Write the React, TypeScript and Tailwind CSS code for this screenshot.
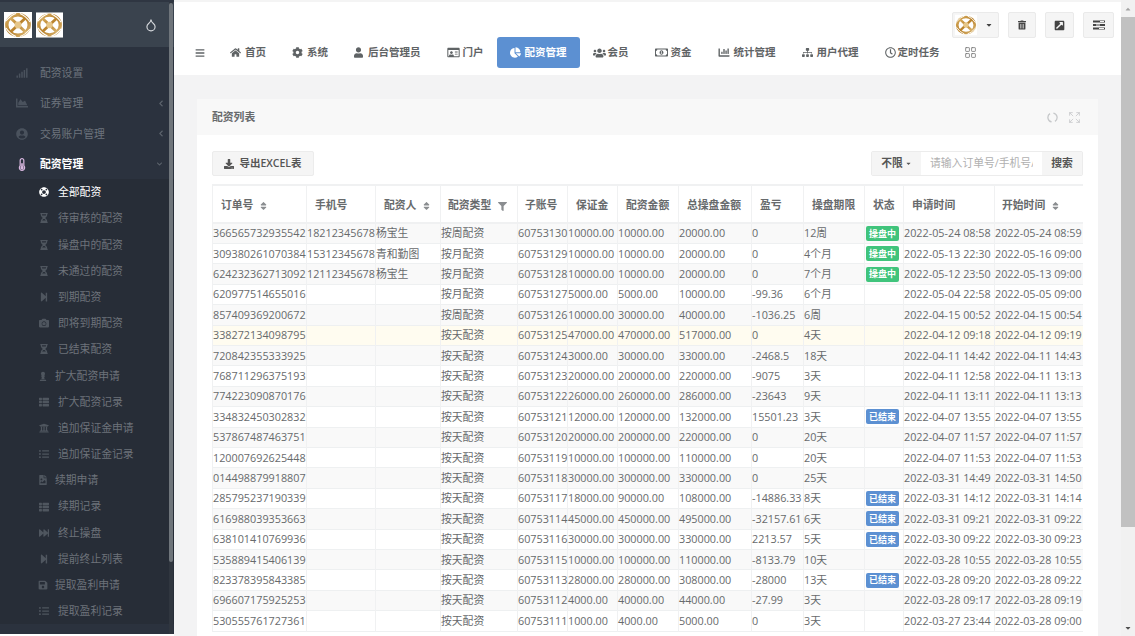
import React from "react";
import {
  FaSignal, FaChartArea, FaUserCircle, FaThermometerHalf, FaLifeRing, FaHourglassHalf, FaStepForward, FaCamera,
  FaChessPawn, FaThList, FaUniversity, FaListUl, FaFileImage, FaFastForward, FaSave, FaHome, FaCog, FaUser,
  FaRegIdCard, FaChartPie, FaUsers, FaRegMoneyBillAlt, FaChartBar, FaSitemap, FaRegClock, FaTrashAlt,
  FaExternalLinkSquareAlt, FaBars, FaDownload, FaSort, FaFilter, FaChevronLeft, FaChevronDown, FaCaretDown, FaCaretUp,
} from "react-icons/fa";
import { Droplet, Expand, LayoutGrid } from "lucide-react";

const font = "font-['Open_Sans','Noto_Sans_CJK_SC',sans-serif]";

function Logo({ className }: { className: string }) {
  return (
    <svg viewBox="0 0 28 26" className={className}>
      <defs>
        <linearGradient id="gold" x1="0" y1="0" x2="1" y2="1">
          <stop offset="0" stopColor="#d9b063" />
          <stop offset="0.5" stopColor="#b9822c" />
          <stop offset="1" stopColor="#dcb874" />
        </linearGradient>
      </defs>
      <rect width="28" height="26" fill="#fff" />
      <ellipse cx="14" cy="13" rx="11.2" ry="10.2" fill="none" stroke="url(#gold)" strokeWidth="3.4" />
      <path d="M6 5.5 L22 20.5 M22 5.5 L6 20.5" fill="none" stroke="url(#gold)" strokeWidth="3" />
      <path d="M2 9 Q7 3 12 1.5 M26 17 Q21 23 16 24.5 M16 1.5 Q22 4 26 10 M12 24.5 Q6 22 2 16" fill="none" stroke="#fff" strokeWidth="1.1" />
      <circle cx="14" cy="13" r="3.4" fill="#e6c688" />
    </svg>
  );
}

type Ic = React.ComponentType<{ className?: string }>;
const subs: { t: string; I: Ic; wide?: boolean; active?: boolean }[] = [
  { t: "全部配资", I: FaLifeRing, active: true },
  { t: "待审核的配资", I: FaHourglassHalf },
  { t: "操盘中的配资", I: FaHourglassHalf },
  { t: "未通过的配资", I: FaHourglassHalf },
  { t: "到期配资", I: FaStepForward },
  { t: "即将到期配资", I: FaCamera },
  { t: "已结束配资", I: FaHourglassHalf },
  { t: "扩大配资申请", I: FaChessPawn, wide: true },
  { t: "扩大配资记录", I: FaThList },
  { t: "追加保证金申请", I: FaUniversity },
  { t: "追加保证金记录", I: FaListUl },
  { t: "续期申请", I: FaFileImage, wide: true },
  { t: "续期记录", I: FaThList },
  { t: "终止操盘", I: FaFastForward },
  { t: "提前终止列表", I: FaStepForward },
  { t: "提取盈利申请", I: FaSave, wide: true },
  { t: "提取盈利记录", I: FaListUl },
];
const mains: { t: string; I: Ic; arrow?: boolean }[] = [
  { t: "配资设置", I: FaSignal },
  { t: "证券管理", I: FaChartArea, arrow: true },
  { t: "交易账户管理", I: FaUserCircle, arrow: true },
];

function Sidebar() {
  return (
    <aside className="relative w-[174px] h-[634px] shrink-0 bg-[#2b323e] border-t-2 border-[#2f3642] flex flex-col overflow-hidden">
      <div className="h-[45px] shrink-0 bg-[#3a434e] flex items-center pl-[4px] gap-[4px]">
        <Logo className="w-[28px] h-[26px]" />
        <Logo className="w-[27px] h-[26px]" />
        <Droplet className="w-[14px] h-[16px] ml-[77px] text-[#d5d8dc]" strokeWidth={2} />
      </div>
      <nav className="pt-[11px] flex flex-col">
        {mains.map((m) => (
          <div key={m.t} className="h-[30.3px] flex items-center pl-[16px] text-[#6d747d] text-[10.8px]">
            <m.I className="w-[12px] h-[12px] text-[#4a525d]" />
            <span className="ml-[12px]">{m.t}</span>
            {m.arrow && <FaChevronLeft className="absolute left-[158px] w-[6px] h-[7px] text-[#5d646d]" />}
          </div>
        ))}
        <div className="h-[30.3px] flex items-center pl-[16px] text-white font-semibold text-[10.8px]">
          <FaThermometerHalf className="w-[12px] h-[13px] text-[#d9b8e0]" />
          <span className="ml-[12px]">配资管理</span>
          <FaChevronDown className="absolute left-[156px] w-[7px] h-[6px] text-[#5d646d]" />
        </div>
        <div className="bg-[#272d37] flex flex-col">
          {subs.map((s) => (
            <div
              key={s.t}
              className={`h-[26.2px] flex items-center text-[10.8px] ${s.wide ? "pl-[38px]" : "pl-[39px]"} ${s.active ? "text-white" : "text-[#6d727a]"}`}
            >
              <s.I className={`w-[10px] h-[10px] shrink-0 ${s.active ? "text-white" : "text-[#4f565f]"}`} />
              <span className={s.wide ? "ml-[7px]" : "ml-[9px]"}>{s.t}</span>
            </div>
          ))}
        </div>
      </nav>
      <div className="absolute left-[169px] top-0 bottom-0 w-[4px] bg-[#30363f]" />
      <div className="absolute left-[169px] top-[1px] w-[4px] h-[559px] bg-[#6f757b] rounded-[2px]" />
    </aside>
  );
}

const navs: { t: string; I: Ic; w: string; ic: string; active?: boolean }[] = [
  { t: "首页", I: FaHome, w: "w-[15px]", ic: "w-[11px] h-[11px]" },
  { t: "系统", I: FaCog, w: "w-[15px]", ic: "w-[11px] h-[11px]" },
  { t: "后台管理员", I: FaUser, w: "w-[14px]", ic: "w-[9px] h-[11px]" },
  { t: "门户", I: FaRegIdCard, w: "w-[16px]", ic: "w-[13px] h-[11px]" },
  { t: "配资管理", I: FaChartPie, w: "w-[15px]", ic: "w-[11px] h-[11px]", active: true },
  { t: "会员", I: FaUsers, w: "w-[15px]", ic: "w-[13px] h-[12px]" },
  { t: "资金", I: FaRegMoneyBillAlt, w: "w-[16px]", ic: "w-[13px] h-[11px]" },
  { t: "统计管理", I: FaChartBar, w: "w-[16px]", ic: "w-[12px] h-[11px]" },
  { t: "用户代理", I: FaSitemap, w: "w-[15px]", ic: "w-[11px] h-[11px]" },
  { t: "定时任务", I: FaRegClock, w: "w-[13px]", ic: "w-[11px] h-[11px]" },
];

function Header() {
  return (
    <header className="h-[75px] shrink-0 bg-white flex flex-col">
      <div className="h-[2px] bg-[#f4f4f4]" />
      <div className="h-[10px]" />
      <div className="h-[26px] flex justify-end gap-[9px] pr-[7px] text-[#444]">
        <div className="w-[47px] bg-[#f5f5f5] border border-[#eaeaea] rounded-[2px] flex items-center pl-[2px] gap-[8px]">
          <Logo className="w-[22px] h-[22px]" />
          <FaCaretDown className="w-[8px] h-[8px]" />
        </div>
        <div className="w-[28px] bg-[#f5f5f5] border border-[#eaeaea] rounded-[2px] flex items-center justify-center"><FaTrashAlt className="w-[8px] h-[10px]" /></div>
        <div className="w-[29px] bg-[#f5f5f5] border border-[#eaeaea] rounded-[2px] flex items-center justify-center"><FaExternalLinkSquareAlt className="w-[11px] h-[11px]" /></div>
        <div className="w-[31px] bg-[#f5f5f5] border border-[#eaeaea] rounded-[2px] flex items-center justify-center">
          <svg viewBox="0 0 12 10" className="w-[12px] h-[10px]" fill="currentColor">
            <path d="M0 0.5h12v2H0z M0 4h12v2H0z M0 7.5h12v2H0z" />
            <path d="M7 1h4v1H7z M3 4.5h4v1H3z M6 8h5v1H6z" fill="#f5f5f5" />
          </svg>
        </div>
      </div>
      <nav className="-mt-[1px] h-[31px] flex items-stretch pl-[8px] text-[#5f6365] text-[10.5px] font-semibold">
        <div className="w-[35px] flex items-center pl-[13px]"><FaBars className="w-[10px] h-[10px]" /></div>
        {navs.map((n) => (
          <div key={n.t} className={`flex items-center px-[13px] rounded-[3px] ${n.active ? "bg-[#5c90d2] text-white" : ""}`}>
            <span className={`${n.w} shrink-0`}><n.I className={n.ic} /></span>
            <span className="pt-[1px]">{n.t}</span>
          </div>
        ))}
        <div className="flex items-center pl-[11px]"><LayoutGrid className="w-[13px] h-[13px] text-[#777]" strokeWidth={1.5} /></div>
      </nav>
    </header>
  );
}

type Row = [string, string, string, string, string, string, string, string, string, string, string, string, string];
const rows: Row[] = [
  ["366565732935542", "18212345678", "杨宝生", "按周配资", "60753130", "10000.00", "10000.00", "20000.00", "0", "12周", "操盘中", "2022-05-24 08:58", "2022-05-24 08:59"],
  ["309380261070384", "15312345678", "青和勤图", "按月配资", "60753129", "10000.00", "10000.00", "20000.00", "0", "4个月", "操盘中", "2022-05-13 22:30", "2022-05-16 09:00"],
  ["624232362713092", "12112345678", "杨宝生", "按月配资", "60753128", "10000.00", "10000.00", "20000.00", "0", "7个月", "操盘中", "2022-05-12 23:50", "2022-05-13 09:00"],
  ["620977514655016", "", "", "按月配资", "60753127", "5000.00", "5000.00", "10000.00", "-99.36", "6个月", "", "2022-05-04 22:58", "2022-05-05 09:00"],
  ["857409369200672", "", "", "按周配资", "60753126", "10000.00", "30000.00", "40000.00", "-1036.25", "6周", "", "2022-04-15 00:52", "2022-04-15 00:54"],
  ["338272134098795", "", "", "按天配资", "60753125", "47000.00", "470000.00", "517000.00", "0", "4天", "", "2022-04-12 09:18", "2022-04-12 09:19"],
  ["720842355333925", "", "", "按天配资", "60753124", "3000.00", "30000.00", "33000.00", "-2468.5", "18天", "", "2022-04-11 14:42", "2022-04-11 14:43"],
  ["768711296375193", "", "", "按天配资", "60753123", "20000.00", "200000.00", "220000.00", "-9075", "3天", "", "2022-04-11 12:58", "2022-04-11 13:13"],
  ["774223090870176", "", "", "按天配资", "60753122", "26000.00", "260000.00", "286000.00", "-23643", "9天", "", "2022-04-11 13:11", "2022-04-11 13:13"],
  ["334832450302832", "", "", "按天配资", "60753121", "12000.00", "120000.00", "132000.00", "15501.23", "3天", "已结束", "2022-04-07 13:55", "2022-04-07 13:55"],
  ["537867487463751", "", "", "按天配资", "60753120", "20000.00", "200000.00", "220000.00", "0", "20天", "", "2022-04-07 11:57", "2022-04-07 11:57"],
  ["120007692625448", "", "", "按天配资", "60753119", "10000.00", "100000.00", "110000.00", "0", "20天", "", "2022-04-07 11:53", "2022-04-07 11:53"],
  ["014498879918807", "", "", "按天配资", "60753118", "30000.00", "300000.00", "330000.00", "0", "25天", "", "2022-03-31 14:49", "2022-03-31 14:50"],
  ["285795237190339", "", "", "按天配资", "60753117", "18000.00", "90000.00", "108000.00", "-14886.33", "8天", "已结束", "2022-03-31 14:12", "2022-03-31 14:14"],
  ["616988039353663", "", "", "按天配资", "60753114", "45000.00", "450000.00", "495000.00", "-32157.61", "6天", "已结束", "2022-03-31 09:21", "2022-03-31 09:22"],
  ["638101410769936", "", "", "按天配资", "60753116", "30000.00", "300000.00", "330000.00", "2213.57", "5天", "已结束", "2022-03-30 09:22", "2022-03-30 09:23"],
  ["535889415406139", "", "", "按天配资", "60753115", "10000.00", "100000.00", "110000.00", "-8133.79", "10天", "", "2022-03-28 10:55", "2022-03-28 10:55"],
  ["823378395843385", "", "", "按天配资", "60753113", "28000.00", "280000.00", "308000.00", "-28000", "13天", "已结束", "2022-03-28 09:20", "2022-03-28 09:22"],
  ["696607175925253", "", "", "按天配资", "60753112", "4000.00", "40000.00", "44000.00", "-27.99", "3天", "", "2022-03-28 09:17", "2022-03-28 09:19"],
  ["530555761727361", "", "", "按天配资", "60753111", "1000.00", "4000.00", "5000.00", "0", "3天", "", "2022-03-27 23:44", "2022-03-28 09:00"],
];

const heads: { t: string; w: string; sort?: boolean; filter?: boolean; pad: string }[] = [
  { t: "订单号", w: "w-[94px]", sort: true, pad: "pl-[8px]" },
  { t: "手机号", w: "w-[69px]", pad: "pl-[8px]" },
  { t: "配资人", w: "w-[65px]", sort: true, pad: "pl-[8px]" },
  { t: "配资类型", w: "w-[77px]", filter: true, pad: "pl-[7px]" },
  { t: "子账号", w: "w-[50px]", pad: "pl-[7px]" },
  { t: "保证金", w: "w-[50px]", pad: "pl-[8px]" },
  { t: "配资金额", w: "w-[61px]", pad: "pl-[8px]" },
  { t: "总操盘金额", w: "w-[73px]", pad: "pl-[8px]" },
  { t: "盈亏", w: "w-[52px]", pad: "pl-[8px]" },
  { t: "操盘期限", w: "w-[61px]", pad: "pl-[8px]" },
  { t: "状态", w: "w-[39px]", pad: "pl-[8px]" },
  { t: "申请时间", w: "w-[91px]", pad: "pl-[8px]" },
  { t: "开始时间", w: "w-[89px]", sort: true, pad: "pl-[7px]" },
];

function DataTable() {
  return (
    <div className="mt-[8px] w-[871px] overflow-hidden">
      <table className="table-fixed w-[871px] border-collapse text-[10.8px] text-[#676a6c]">
        <colgroup>{heads.map((h) => <col key={h.t} className={h.w} />)}</colgroup>
        <thead>
          <tr className="h-[38px] bg-white border-t-2 border-b-2 border-[#f0f1f2]">
            {heads.map((h) => (
              <th key={h.t} className={`${h.pad} pt-[2px] text-left font-semibold whitespace-nowrap border-r border-[#f0f1f2] first:border-l`}>
                {h.t}
                {h.sort && <FaSort className="inline ml-[6px] w-[9px] h-[10px] text-[#8a8d90]" />}
                {h.filter && <FaFilter className="inline ml-[7px] w-[9px] h-[9px] text-[#8a8d90]" />}
              </th>
            ))}
          </tr>
        </thead>
        <tbody>
          {rows.map((r, i) => (
            <tr key={r[0]} className={`h-[20.42px] border-b border-[#eef0f1] ${i === 5 ? "bg-[#fffcf0]" : i % 2 === 0 ? "bg-[#f9f9f9]" : "bg-white"}`}>
              {r.map((c, j) => (
                <td key={j} className={`p-0 ${j === 0 ? "border-l" : ""} whitespace-nowrap border-r border-[#f0f1f2]`}>
                  {j === 10 ? <Badge t={c} /> : c}
                </td>
              ))}
            </tr>
          ))}
        </tbody>
      </table>
    </div>
  );
}

function Badge({ t }: { t: string }) {
  if (!t) return null;
  const c = t === "操盘中" ? "bg-[#40c47c]" : "bg-[#5c90d2]";
  return <span className={`ml-[1px] flex w-[33px] h-[15px] items-center justify-center rounded-[2px] text-white text-[9px] font-semibold ${c}`}>{t}</span>;
}

function Card() {
  return (
    <section className="ml-[23px] mt-[24px] w-[901px] h-[537px] bg-white flex flex-col">
      <div className="h-[36px] shrink-0 bg-[#f8f8f8] flex items-center px-[15px] text-[10.8px] font-semibold text-[#676a6c]">
        <span className="flex-1">配资列表</span>
        <svg viewBox="0 0 12 12" className="w-[11px] h-[11px] text-[#c6c8ca]" fill="none" stroke="currentColor" strokeWidth="1.4">
          <path d="M7 1.1A5 5 0 0 1 8.7 10.2 M5 10.9A5 5 0 0 1 3.3 1.8" />
        </svg>
        <Expand className="ml-[10px] mr-[2px] w-[13px] h-[13px] text-[#c6c8ca]" strokeWidth={1.5} />
      </div>
      <div className="pt-[16px] pl-[15px] flex flex-col">
        <div className="w-[871px] h-[25px] flex justify-between">
          <button className="w-[102px] flex items-center justify-center gap-[5px] bg-[#f5f5f5] border border-[#ececec] rounded-[2px] text-[10.5px] font-semibold text-[#555]">
            <FaDownload className="w-[10px] h-[10px]" />导出EXCEL表
          </button>
          <div className="flex rounded-[2px] border border-[#ececec] text-[10.8px] font-semibold text-[#555]">
            <div className="w-[49px] bg-[#f5f5f5] flex items-center justify-center gap-[2px]">不限<FaCaretDown className="w-[7px] h-[7px]" /></div>
            <input className="w-[121px] px-[9px] bg-white outline-none font-normal placeholder:text-[#b0b0b0]" placeholder="请输入订单号/手机号/子账号" />
            <div className="w-[40px] bg-[#f5f5f5] flex items-center justify-center">搜索</div>
          </div>
        </div>
        <DataTable />
      </div>
    </section>
  );
}

function PageScroll() {
  return (
    <div className="w-[14px] shrink-0 h-full bg-[#f1f1f1] flex flex-col items-center">
      <div className="h-[17px] flex items-center justify-center"><FaCaretUp className="w-[8px] h-[8px] text-[#a3a3a3]" /></div>
      <div className="w-full h-[510px] bg-[#c1c1c1]" />
      <div className="flex-1" />
      <div className="h-[17px] flex items-center justify-center"><FaCaretDown className="w-[8px] h-[8px] text-[#505050]" /></div>
    </div>
  );
}

export default function App() {
  return (
    <div className={`w-[1135px] h-[636px] overflow-hidden flex bg-white ${font}`}>
      <Sidebar />
      <main className="w-[947px] h-full shrink-0 flex flex-col bg-[#f3f3f4] overflow-hidden">
        <Header />
        <Card />
      </main>
      <PageScroll />
    </div>
  );
}
